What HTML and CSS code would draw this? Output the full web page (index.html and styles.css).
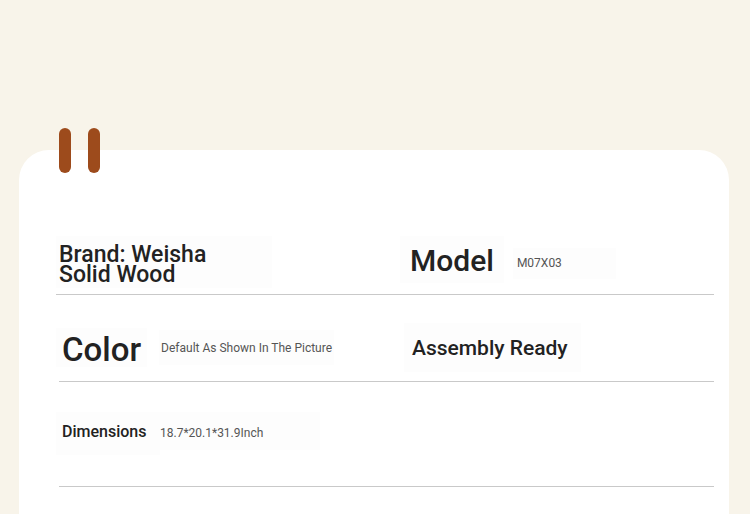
FILE: index.html
```html
<!DOCTYPE html>
<html lang="en">
<head>
<meta charset="utf-8">
<title>Specifications</title>
<link rel="stylesheet" href="styles.css">
</head>
<body>
<div class="page">
  <div class="card">
    <div class="clips"><span class="clip"></span><span class="clip"></span></div>

    <div class="row row--1">
      <div class="col">
        <div class="box brand">Brand: Weisha<br>Solid Wood</div>
      </div>
      <div class="col">
        <div class="box model">Model</div>
        <div class="box model-val">M07X03</div>
      </div>
    </div>
    <div class="rule rule--first"></div>

    <div class="row row--2">
      <div class="col">
        <div class="box color">Color</div>
        <div class="box color-val">Default As Shown In The Picture</div>
      </div>
      <div class="col">
        <div class="box assembly">Assembly Ready</div>
      </div>
    </div>
    <div class="rule"></div>

    <div class="row row--3">
      <div class="col">
        <div class="box dims">Dimensions</div>
        <div class="box dims-val">18.7*20.1*31.9Inch</div>
      </div>
      <div class="col"></div>
    </div>
    <div class="rule"></div>
  </div>
</div>
</body>
</html>
```

FILE: styles.css
```css
* { box-sizing: border-box; }
html, body {
  margin: 0;
  height: 514px;
  overflow: hidden;
}
body {
  background: #f8f4ea;
  font-family: Roboto, "Liberation Sans", sans-serif;
  color: #222;
}
.page {
  padding: 150px 21px 0 19px;
}
.card {
  position: relative;
  background: #ffffff;
  border-radius: 30px 30px 0 0;
  min-height: 364px;
  padding: 80px 15px 0 37px;
}
.clips {
  position: absolute;
  top: -22px;
  left: 40px;
  display: flex;
  gap: 17px;
}
.clip {
  display: block;
  width: 12px;
  height: 45px;
  border-radius: 6px;
  background: #9d4b1c;
}
.row {
  display: grid;
  grid-template-columns: 344px 1fr;
}
.row--1 { height: 64px; }
.row--2 { height: 86px; }
.row--3 { height: 104px; }
.col {
  display: flex;
  align-items: flex-start;
}
.rule {
  height: 1px;
  background: #c9c9c9;
  margin-left: 3px;
}
.rule--first { margin-left: 0; }
.box {
  background: #fdfdfd;
  white-space: nowrap;
}
.brand {
  margin-top: 6px;
  width: 216px;
  padding: 9px 0 4px 3px;
  font-size: 23px;
  line-height: 19.5px;
  font-weight: 500;
}
.model {
  margin-top: 6px;
  padding: 7px 10px 4px;
  font-size: 30px;
  line-height: 36px;
  font-weight: 500;
}
.model-val {
  margin-top: 18px;
  margin-left: 9px;
  width: 103px;
  padding: 8px 4px 9px;
  font-size: 12px;
  line-height: 14px;
  color: #555;
}
.color {
  margin-top: 33px;
  padding: 5px 6px 0;
  font-size: 33px;
  line-height: 34px;
  font-weight: 500;
  height: 39px;
}
.color-val {
  margin-top: 35px;
  margin-left: 12px;
  padding: 11px 2px 10px;
  font-size: 12px;
  line-height: 14px;
  color: #555;
}
.assembly {
  margin-top: 28px;
  margin-left: 4px;
  padding: 13px 13px 12px 8px;
  font-size: 21px;
  line-height: 24px;
  font-weight: 500;
}
.dims {
  margin-top: 30px;
  width: 104px;
  padding: 10px 0 14px 6px;
  font-size: 16px;
  line-height: 19px;
  font-weight: 500;
}
.dims-val {
  margin-top: 30px;
  width: 160px;
  padding: 14px 0 10px;
  font-size: 12px;
  line-height: 14px;
  color: #555;
}
```
